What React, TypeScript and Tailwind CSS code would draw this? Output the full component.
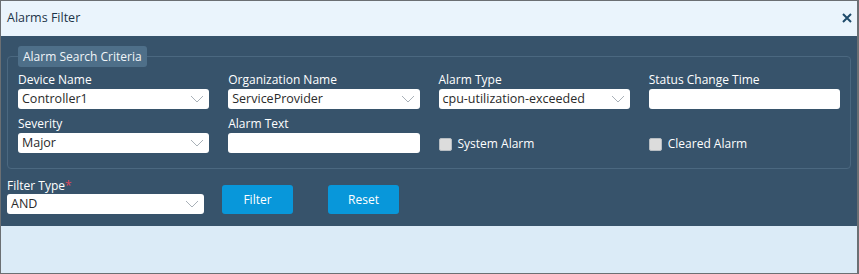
import React from "react";

function Chevron() {
  return (
    <svg width="14" height="8" viewBox="0 0 14 8" className="shrink-0">
      <path d="M1 1l6 6 6-6" fill="none" stroke="#a9b1b8" strokeWidth="1" />
    </svg>
  );
}

function Select({ value, className = "" }: { value: string; className?: string }) {
  return (
    <div
      className={`flex h-[20px] items-center justify-between rounded-[3px] bg-white pl-[4px] pr-[5px] text-[12.5px] text-[#2a2a2a] ${className}`}
    >
      <span>{value}</span>
      <Chevron />
    </div>
  );
}

function TextInput() {
  return <div className="h-[20px] rounded-[3px] bg-white" />;
}

function Field({ label, children }: { label: string; children: React.ReactNode }) {
  return (
    <div className="flex flex-col">
      <label className="h-[17px] text-[12px] leading-[16px] text-white">{label}</label>
      {children}
    </div>
  );
}

function Check({ label }: { label: string }) {
  return (
    <div className="flex items-end">
      <div className="flex items-center gap-[6px]">
        <span className="h-[13px] w-[13px] rounded-[2px] border border-[#b7bdc2] bg-[#dcdcdc]" />
        <span className="text-[12px] text-white">{label}</span>
      </div>
    </div>
  );
}

export default function App() {
  return (
    <div
      className="h-[274px] w-[859px] border-t border-b border-l border-r-2 border-[#6b6f73] bg-[#dbebf7]"
      style={{ fontFamily: '"Open Sans", "Noto Sans", sans-serif' }}
    >
      <div className="flex h-[35px] items-center justify-between bg-[#eaf4fc] pl-[6px] pr-[5px] pb-[1px]">
        <span className="text-[12.5px] text-[#1d3549]">Alarms Filter</span>
        <svg width="10" height="10" viewBox="0 0 10 10">
          <path d="M1 1l8 8M9 1l-8 8" stroke="#1e4a6a" strokeWidth="2" />
        </svg>
      </div>
      <div className="h-[190px] bg-[#37536b] px-[6px] pt-[10px]">
        <fieldset className="rounded-[4px] border border-[#4b6880] px-[10px] pb-[15px]">
          <legend className="rounded-[3px] bg-[#4e6f89] px-[5px] py-[2px] text-[12px] leading-[17px] text-[#f1f5f8]">
            Alarm Search Criteria
          </legend>
          <div className="mt-[5px] grid grid-cols-4 gap-x-[19px] gap-y-[7px]">
            <Field label="Device Name">
              <Select value="Controller1" />
            </Field>
            <Field label="Organization Name">
              <Select value="ServiceProvider" />
            </Field>
            <Field label="Alarm Type">
              <Select value="cpu-utilization-exceeded" />
            </Field>
            <Field label="Status Change Time">
              <TextInput />
            </Field>
            <Field label="Severity">
              <Select value="Major" />
            </Field>
            <Field label="Alarm Text">
              <TextInput />
            </Field>
            <Check label="System Alarm" />
            <Check label="Cleared Alarm" />
          </div>
        </fieldset>
        <div className="mt-[9px] flex items-start">
          <div className="flex w-[197px] flex-col">
            <label className="h-[16px] text-[12px] leading-[16px] text-white">
              Filter Type<span className="text-[#e0475a]">*</span>
            </label>
            <Select value="AND" />
          </div>
          <button className="ml-[18px] mt-[7px] h-[29px] w-[71px] rounded-[3px] bg-[#0897da] text-[12px] text-white">
            Filter
          </button>
          <button className="ml-[35px] mt-[7px] h-[29px] w-[71px] rounded-[3px] bg-[#0897da] text-[12px] text-white">
            Reset
          </button>
        </div>
      </div>
    </div>
  );
}
